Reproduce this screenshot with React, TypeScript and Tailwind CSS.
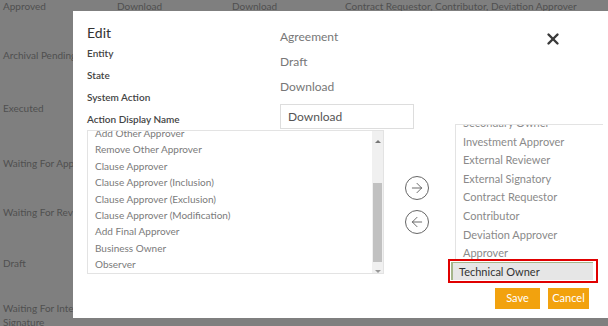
import { ArrowRight, ArrowLeft, X } from "lucide-react";

const leftItems = [
  "Add Other Approver",
  "Remove Other Approver",
  "Clause Approver",
  "Clause Approver (Inclusion)",
  "Clause Approver (Exclusion)",
  "Clause Approver (Modification)",
  "Add Final Approver",
  "Business Owner",
  "Observer",
];

const rightItems = [
  "Investment Approver",
  "External Reviewer",
  "External Signatory",
  "Contract Requestor",
  "Contributor",
  "Deviation Approver",
  "Approver",
];

const bgRows = [
  { label: "Archival Pending", h: "h-[53px]" },
  { label: "Executed", h: "h-[55px]" },
  { label: "Waiting For Appr", h: "h-[49px]" },
  { label: "Waiting For Revie", h: "h-[51px]" },
  { label: "Draft", h: "h-[43px]" },
];

export default function App() {
  return (
    <div
      className="relative h-[326px] w-[608px] overflow-hidden bg-[#7f7f7f] text-[10px] text-[#4f4f4f]"
      style={{ fontFamily: "Lato, 'Open Sans', sans-serif" }}
    >
      {/* background table */}
      <div className="flex h-[11px] items-center leading-none">
        <div className="w-[117px] pl-[3px]">Approved</div>
        <div className="w-[115px]">Download</div>
        <div className="w-[113px]">Download</div>
        <div className="whitespace-nowrap">Contract Requestor, Contributor, Deviation Approver</div>
      </div>
      <div className="flex flex-col pl-[3px] pt-[39px] leading-none">
        {bgRows.map((r) => (
          <div key={r.label} className={r.h}>
            {r.label}
          </div>
        ))}
        <div className="leading-[14px]">
          Waiting For Internal
          <br />
          Signature
        </div>
      </div>

      {/* modal */}
      <div className="absolute left-[73px] top-[11px] h-[307px] w-[560px] bg-white text-[#444]">
        <div className="flex">
          <div className="w-[207px] pl-[14px] pt-[14px]">
            <div className="text-[14px] leading-[16px] text-[#333]">Edit</div>
            <div className="mt-[6px] flex flex-col gap-[10px] text-[10px] font-semibold leading-[12px] text-[#444]">
              <div>Entity</div>
              <div>State</div>
              <div>System Action</div>
              <div>Action Display Name</div>
            </div>
          </div>
          <div className="w-[200px] pt-[19px] text-[12px] leading-[14px] text-[#777]">
            <div>Agreement</div>
            <div className="mt-[11px]">Draft</div>
            <div className="mt-[11px]">Download</div>
            <div className="mt-[10px] flex h-[25px] w-[134px] items-center border border-[#ddd] px-[7px] text-[#555]">
              Download
            </div>
          </div>
          <div className="pl-[64px] pt-[19px] text-[#3a3a3a]">
            <X size={18} strokeWidth={3.2} />
          </div>
        </div>

        <div className="mt-[1px] flex">
          {/* left list */}
          <div className="ml-[14px] flex h-[144px] w-[297px] border border-[#e3e3e3]">
            <div className="flex-1 overflow-hidden pl-[7px] text-[10px] leading-[16.4px] text-[#7a7a7a]">
              <div className="-mt-[6px]">
                {leftItems.map((t) => (
                  <div key={t}>{t}</div>
                ))}
              </div>
            </div>
            <div className="flex w-[11px] flex-col items-center bg-[#f0f0f0]">
              <div className="mt-[9px] h-0 w-0 border-x-[3px] border-b-[3px] border-x-transparent border-b-[#777]" />
              <div className="mt-[40px] h-[80px] w-[9px] bg-[#c1c1c1]" />
              <div className="mt-[8px] h-0 w-0 border-x-[3px] border-t-[3px] border-x-transparent border-t-[#999]" />
            </div>
          </div>

          {/* arrows */}
          <div className="ml-[21px] mt-[46px] flex flex-col gap-[10px] text-[#555]">
            <div className="flex h-[24px] w-[24px] items-center justify-center rounded-full border border-[#666]">
              <ArrowRight size={16} strokeWidth={1.3} />
            </div>
            <div className="flex h-[24px] w-[24px] items-center justify-center rounded-full border border-[#666]">
              <ArrowLeft size={16} strokeWidth={1.3} />
            </div>
          </div>

          {/* right list */}
          <div className="-mt-[6px] ml-[26px] flex w-[148px] flex-col">
            <div className="h-[135px] overflow-hidden border-l border-t border-[#e3e3e3] pl-[7px] text-[11px] leading-[18.6px] text-[#8a8a8a]">
              <div className="-mt-[11px]">
                <div>Secondary Owner</div>
                {rightItems.map((t) => (
                  <div key={t}>{t}</div>
                ))}
              </div>
            </div>
            <div className="-ml-[7px] mr-[5px] border-2 border-[#e00000] p-[1px] pr-[3px]">
              <div className="h-[18px] border-l-2 border-t border-[#a4b58a] bg-[#e6e6e6] pl-[6px] text-[11px] leading-[17px] text-[#333]">
                Technical Owner
              </div>
            </div>
            <div className="ml-[40px] mt-[5px] flex gap-[8px] text-[11px] text-white">
              <div className="flex h-[21px] w-[45px] items-center justify-center bg-[#f2a20e]">Save</div>
              <div className="flex h-[21px] w-[41px] items-center justify-center bg-[#f2a20e]">Cancel</div>
            </div>
          </div>
        </div>
      </div>
    </div>
  );
}
